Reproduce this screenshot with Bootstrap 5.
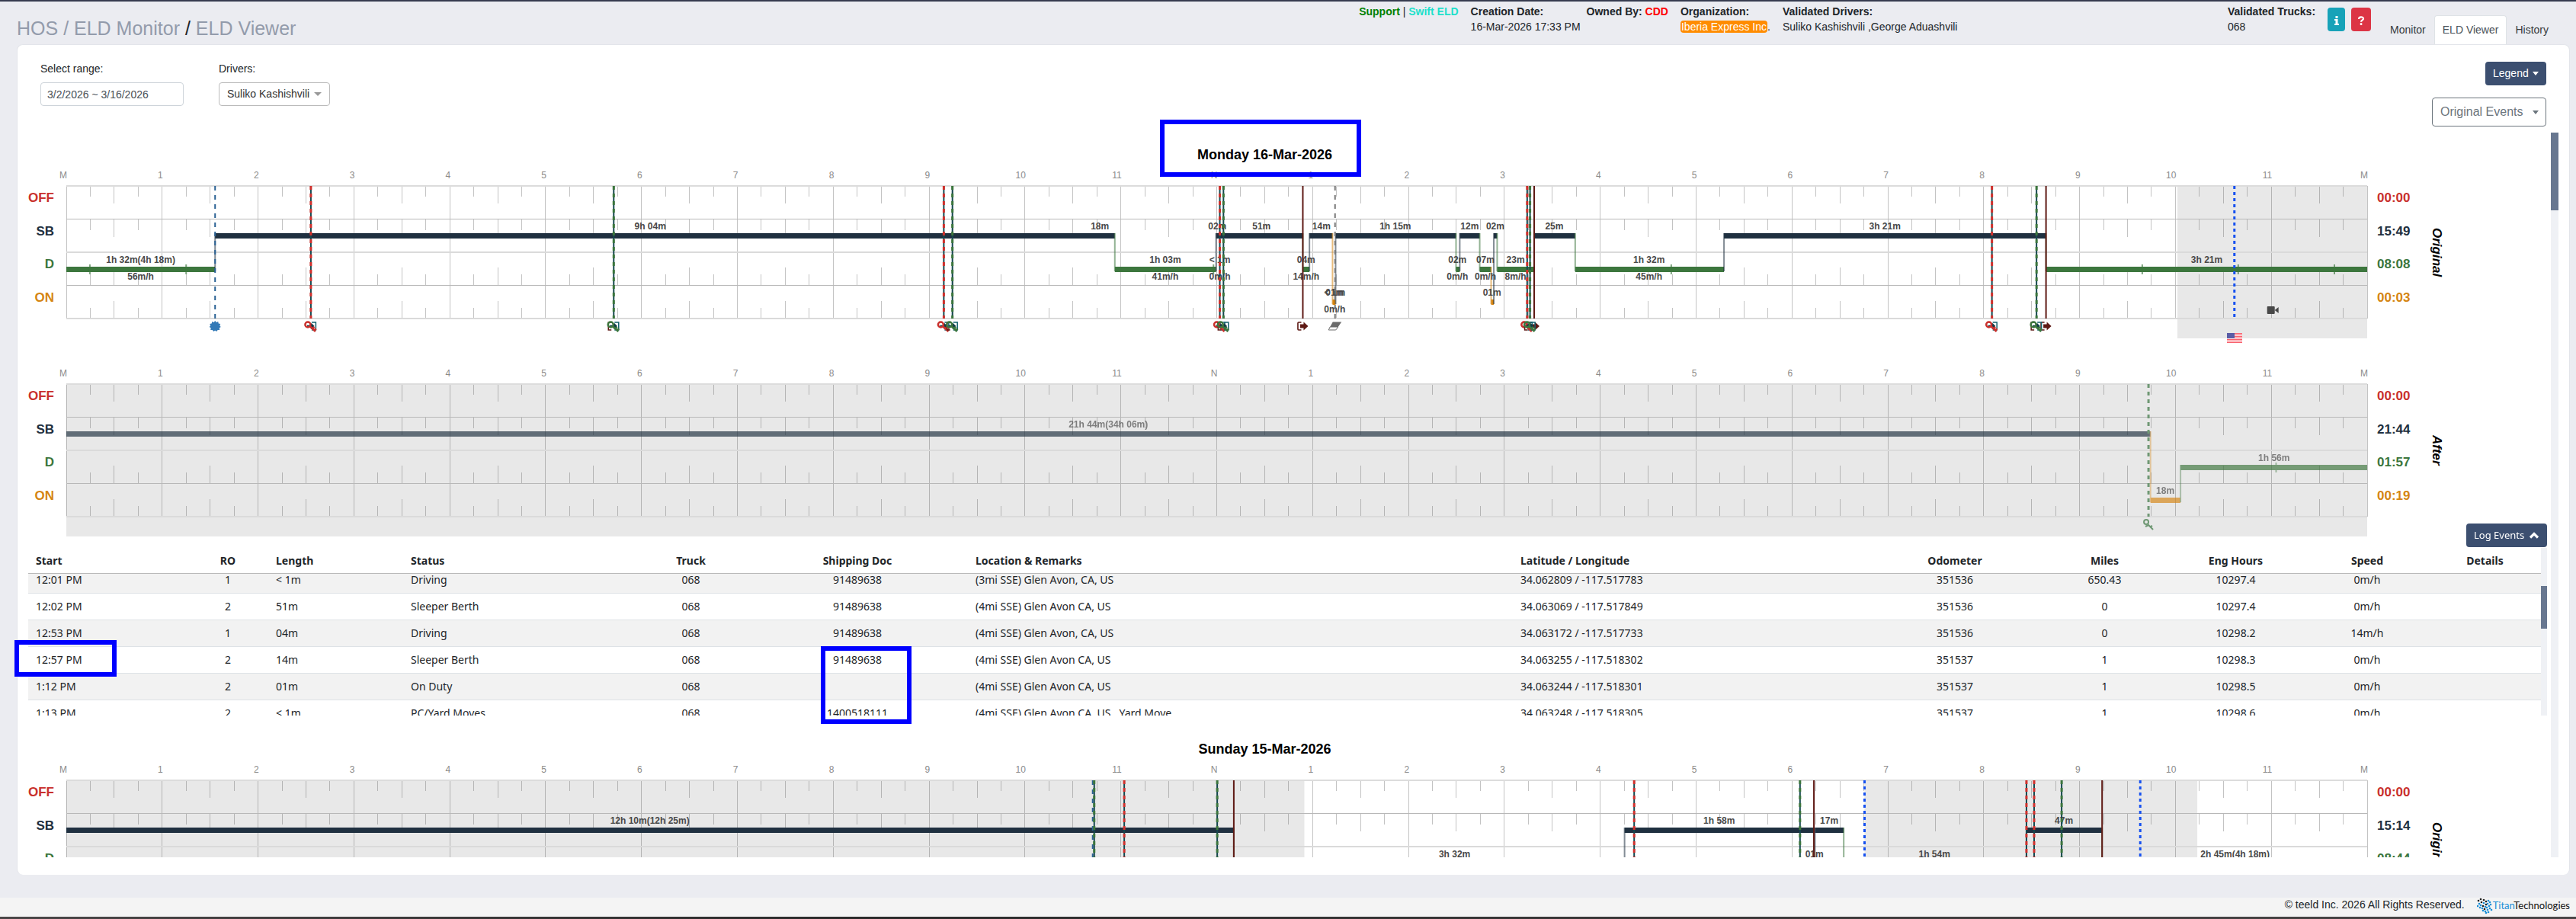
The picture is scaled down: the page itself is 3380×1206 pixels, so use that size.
<!DOCTYPE html>
<html lang="en">
<head>
<meta charset="utf-8">
<meta name="viewport" content="width=device-width, initial-scale=1">
<title>ELD Viewer</title>
<link href="https://cdn.jsdelivr.net/npm/bootstrap@5.3.0/dist/css/bootstrap.min.css" rel="stylesheet">
<style>
:root{--navy:#3c4f70;--thumb:#687790;--track:#eff1f5}
body{font-family:"Liberation Sans",Arial,sans-serif;font-size:14px;line-height:20px;color:#212529;background:#ebecf1;border-top:2px solid #363b4f}
.page-head{height:56px;padding:0 25px 0 22px}
.crumbs{font-size:25px;line-height:30px;padding-top:20px}
.crumbs a{color:#939bab;text-decoration:none}
.meta-line{padding-top:3px;column-gap:16px}
.meta-line strong{display:block}
.created{flex:0 0 136px;min-width:0}
.drivers-meta{flex:0 0 568px}
.org-tag{background:#ff8c00;color:#fff;border-radius:4px;padding:0 1px}
.mini-btn{width:23px;height:31px;padding:0;line-height:29px;border-radius:4px;color:#fff;background:#17a2b8}
.mini-btn.wide{width:26px;background:#dc3545}
.nav-tabs{border:0;margin-left:14px;padding-top:18px}
.nav-tabs .nav-link{color:#343a40;padding:8px 10px 10px;line-height:20px;height:39px;border-radius:4px 4px 0 0}
.nav-tabs .nav-link.active{color:#495057;background:#fff;border-color:#dee2e6 #dee2e6 #fff}
.main-card{margin:0 8px 0 22px;background:#fff;border-radius:8px;border:1px solid #e3e5ea;border-bottom:0;padding:22px 14px 23px;position:relative}
.filters{padding:0 16px;height:85px}
.filters label{display:block;line-height:18px;margin-bottom:9px}
.filters .form-control,.filters .form-select{height:31px;font-size:14px;padding:4px 8px;border-radius:4px;border-color:#ced4da;color:#495057}
.range-box{width:188px;margin-right:46px}
.filters .form-select{width:146px;padding:4px 10px;border-color:#bbb;color:#333;background-image:url("data:image/svg+xml,%3Csvg xmlns='http://www.w3.org/2000/svg' viewBox='0 0 10 5'%3E%3Cpath d='M0 0h10L5 5z' fill='%23999'/%3E%3C/svg%3E");background-size:10px 5px;background-position:right 10px center}
.btn-navy{background:var(--navy);color:#fff;font-size:14px;line-height:21px;padding:4px 9px;border-radius:4px}
.btn-navy:hover{background:#2f405d;color:#fff}
.legend-btn{width:80px}
.orig-btn{font-size:16px;line-height:24px;padding:6px 9px 6px 10px;width:150px;border:1px solid #6c757d;color:#6c757d;background:#fff;border-radius:4px;margin-top:16px}
.caret-s{display:inline-block;border:4px solid transparent;border-top:5px solid currentColor;border-bottom:0}
.scroll-pane{flex:1 1 0;min-width:0;height:951px;overflow:hidden}
.scroll-row{column-gap:5px;margin-top:8px}
.track-lg{flex:none;width:10px;background:var(--track)}
.track-lg div{height:102px;background:var(--thumb)}
.track-sm{flex:none;width:8px;background:var(--track);padding-top:50px}
.track-sm div{height:56px;background:var(--thumb)}
.day-title{font-size:18px;line-height:22px;font-weight:700;color:#000;text-align:center;margin:0;padding:18px 60px 0 0}
.log-row + .log-row{margin-top:30px}
.side-l,.side-r{flex:none;height:204px;padding-top:30px;font-size:17px;font-weight:700;line-height:32px}
.side-l{width:50px;text-align:right;padding-right:16px}
.side-r{width:56px;padding-left:13px}
.side-l span,.side-r span{flex:1 1 0}
.c-off{color:#c9302c}.c-sb{color:#1f3040}.c-d{color:#3c763d}.c-on{color:#d58512}
.side-name{flex:none;width:180px;height:204px;padding:30px 0 0 25px}
.side-name span{writing-mode:vertical-rl;font-size:17px;line-height:20px;font-style:italic;font-weight:700;color:#000;height:174px;text-align:center}
.log-plot{flex:1 1 0;min-width:0}
.log-svg{display:block;width:100%;height:230px;overflow:visible}
.log-svg text{font-size:12px;font-weight:700;fill:#484848;text-anchor:middle}
.log-svg text.hr-no{font-weight:400;fill:#8b8b8b;text-anchor:end}
.events-bar{margin-top:-17px;padding-bottom:1px}
.events-btn{font-family:"Noto Sans","Open Sans",sans-serif;font-size:13px;width:106px;white-space:nowrap}
.events-wrap{height:220px}
.events-clip{flex:1 1 0;min-width:0;overflow:hidden}
.events-tbl{font-family:"Noto Sans","Open Sans",sans-serif;font-size:14px;line-height:20px;width:100%;table-layout:fixed;border-collapse:separate;border-spacing:0;color:#212529}
.events-tbl th{position:sticky;top:0;background:#fff;height:34px;padding:0 10px;border-bottom:1px solid #b9b9b9;white-space:nowrap;z-index:1}
.events-tbl td{height:35px;padding:0 10px;border-bottom:1px solid #dee2e6;white-space:nowrap}
.events-tbl tbody tr:nth-child(odd) td{background:#f2f2f2}
.day-two .day-title{padding-top:33px}
.note-box{position:absolute;border:6px solid #00f;pointer-events:none;z-index:3}
.note-day{left:calc(50% - 175px);top:98px;width:264px;height:75px}
.note-start{left:-4px;top:781px;width:134px;height:48px}
.note-doc{left:1054px;top:789px;width:119px;height:102px}
.foot{margin-top:30px;height:25px;background:#f4f4f4;padding:0 8px 0 0;column-gap:16px;line-height:18px}
.foot-brand{font-family:Lato,sans-serif;font-size:13px;line-height:21px;color:#111}
.foot-brand b{font-weight:400;color:#1b8fd6}
.foot-end{height:3px;background:linear-gradient(90deg,#4a4647,#2a2a2a 33%,#4a4647)}
</style>
</head>
<body>
<header class="page-head d-flex">
  <nav class="crumbs me-auto" aria-label="breadcrumb"><a href="#">HOS</a> <a href="#">/ ELD Monitor</a> / <a href="#">ELD Viewer</a></nav>
  <div class="meta-line d-flex text-nowrap">
    <div><strong><span style="color:#008000">Support</span> <span class="fw-normal">|</span> <span style="color:#1de0cb">Swift ELD</span></strong></div>
    <div class="created"><strong>Creation Date:</strong>16-Mar-2026 17:33 PM</div>
    <div><strong>Owned By: <span style="color:#f00">CDD</span></strong></div>
    <div><strong>Organization:</strong><span class="org-tag">Iberia Express Inc</span>.</div>
    <div class="drivers-meta"><strong>Validated Drivers:</strong>Suliko Kashishvili ,George Aduashvili</div>
    <div><strong>Validated Trucks:</strong>068</div>
  </div>
  <div class="d-flex gap-2 ms-3 pt-2 align-items-start">
    <button class="btn mini-btn" type="button" aria-label="Info"><svg width="8" height="12" viewBox="0 0 8 12"><path fill="#fff" d="M2.500 0h3v3h-3zM1 4h4.500v6H7v2H1v-2h1.500V6H1z"/></svg></button>
    <button class="btn mini-btn wide" type="button" aria-label="Help"><svg width="10" height="12" viewBox="0 0 10 12"><path fill="none" stroke="#fff" stroke-width="2.200" d="M2 4C2 .6 8 .6 8 3.600 8 5.500 5 5.400 5 7.800"/><path fill="#fff" d="M3.800 9.200h2.500V12H3.800z"/></svg></button>
  </div>
  <ul class="nav nav-tabs flex-nowrap text-nowrap">
    <li class="nav-item"><a class="nav-link" href="#">Monitor</a></li>
    <li class="nav-item"><a class="nav-link active" href="#">ELD Viewer</a></li>
    <li class="nav-item"><a class="nav-link" href="#">History</a></li>
  </ul>
</header>

<main class="main-card">
  <div class="filters d-flex">
    <div class="range-box"><label for="range">Select range:</label><input id="range" class="form-control" value="3/2/2026 ~ 3/16/2026"></div>
    <div><label for="drv">Drivers:</label><select id="drv" class="form-select"><option>Suliko Kashishvili</option></select></div>
    <div class="ms-auto d-flex flex-column align-items-end">
      <button class="btn btn-navy legend-btn d-flex justify-content-between align-items-center" type="button">Legend <span class="caret-s"></span></button>
      <button class="btn orig-btn d-flex justify-content-between align-items-center" type="button">Original Events <span class="caret-s"></span></button>
    </div>
  </div>

  <div class="scroll-row d-flex">
    <div class="scroll-pane">
      <section>
        <h2 class="day-title">Monday 16-Mar-2026</h2>
        <div class="log-row d-flex" data-log="mon" data-name="Original" data-times="00:00,15:49,08:08,00:03"></div>
        <div class="log-row d-flex" data-log="after" data-name="After" data-times="00:00,21:44,01:57,00:19"></div>
        <div class="events-bar d-flex justify-content-end position-relative">
          <button class="btn btn-navy events-btn d-flex justify-content-between align-items-center" type="button">Log Events <svg width="14" height="9" viewBox="0 0 14 9"><path d="M2 7.500 7 2.500l5 5" fill="none" stroke="#fff" stroke-width="3.200"/></svg></button>
        </div>
        <div class="events-wrap d-flex">
          <div class="events-clip" id="clip">
            <table class="events-tbl">
              <colgroup><col style="width:209px"><col style="width:106px"><col style="width:177px"><col style="width:304px"><col style="width:147px"><col style="width:290px"><col style="width:715px"><col style="width:464px"><col style="width:232px"><col style="width:161px"><col style="width:183px"><col style="width:162px"><col style="width:147px"></colgroup>
              <thead><tr><th>Start</th><th class="text-center">RO</th><th>Length</th><th>Status</th><th class="text-center">Truck</th><th class="text-center">Shipping Doc</th><th>Location &amp; Remarks</th><th>Latitude / Longitude</th><th class="text-center">Odometer</th><th class="text-center">Miles</th><th class="text-center">Eng Hours</th><th class="text-center">Speed</th><th class="text-center">Details</th></tr></thead>
              <tbody id="rows"></tbody>
            </table>
          </div>
          <div class="track-sm"><div></div></div>
        </div>
      </section>
      <section class="day-two">
        <h2 class="day-title">Sunday 15-Mar-2026</h2>
        <div class="log-row d-flex" data-log="sun" data-name="Original" data-times="00:00,15:14,08:44,00:02"></div>
      </section>
    </div>
    <div class="track-lg"><div></div></div>
  </div>
  <div class="note-box note-day"></div>
  <div class="note-box note-start"></div>
  <div class="note-box note-doc"></div>
</main>

<footer class="foot d-flex justify-content-end">
  <span>© teeld Inc. 2026 All Rights Reserved.</span>
  <span class="foot-brand d-flex"><svg id="dots" width="21" height="22" viewBox="0 0 21 22"></svg><span><b>Titan</b>Technologies</span></span>
</footer>
<div class="foot-end"></div>

<script src="https://cdn.jsdelivr.net/npm/bootstrap@5.3.0/dist/js/bootstrap.bundle.min.js"></script>
<script>
// Event table rows
const events=[
 ['12:01 PM',1,'&lt; 1m','Driving','068','91489638','(3mi SSE) Glen Avon, CA, US','34.062809 / -117.517783','351536','650.43','10297.4','0m/h',''],
 ['12:02 PM',2,'51m','Sleeper Berth','068','91489638','(4mi SSE) Glen Avon CA, US','34.063069 / -117.517849','351536','0','10297.4','0m/h',''],
 ['12:53 PM',1,'04m','Driving','068','91489638','(4mi SSE) Glen Avon, CA, US','34.063172 / -117.517733','351536','0','10298.2','14m/h',''],
 ['12:57 PM',2,'14m','Sleeper Berth','068','91489638','(4mi SSE) Glen Avon CA, US','34.063255 / -117.518302','351537','1','10298.3','0m/h',''],
 ['1:12 PM',2,'01m','On Duty','068','','(4mi SSE) Glen Avon CA, US','34.063244 / -117.518301','351537','1','10298.5','0m/h',''],
 ['1:13 PM',2,'&lt; 1m','PC/Yard Moves','068','1400518111','(4mi SSE) Glen Avon CA, US , Yard Move','34.063248 / -117.518305','351537','1','10298.6','0m/h','']];
const left=[0,2,3,6,7];
document.getElementById('rows').innerHTML=events.map(r=>'<tr>'+r.map((c,i)=>`<td${left.includes(i)?'':' class="text-center"'}>${c}</td>`).join('')+'</tr>').join('');
document.getElementById('clip').scrollTop=9;

// Logs: hours from midnight; segs = [status,end]; labels = [hour,status,duration,speed]
const logs={
 mon:{shade:[[22.02,24]],
  segs:[['D',1.552],['SB',10.937],['D',11.993],['SB',12.898],['D',12.967],['SB',13.208],['ON',13.24],['SB',14.496],['D',14.535],['SB',14.743],['D',14.862],['ON',14.89],['SB',14.925],['D',15.311],['SB',15.739],['D',17.291],['SB',20.65],['D',24]],
  labels:[[.776,'D','1h 32m(4h 18m)','56m/h'],[6.091,'SB','9h 04m'],[10.781,'SB','18m'],[11.463,'D','1h 03m','41m/h'],[12.006,'SB','02m'],[12.032,'D','< 1m','0m/h'],[12.467,'SB','51m'],[12.932,'D','04m','14m/h'],[13.092,'SB','14m'],[13.23,'ON','01m'],[13.23,'ON','< 1m','0m/h'],[13.863,'SB','1h 15m'],[14.51,'D','02m','0m/h'],[14.638,'SB','12m'],[14.802,'D','07m','0m/h'],[14.905,'SB','02m'],[14.871,'ON','01m'],[15.117,'D','23m','8m/h'],[15.521,'SB','25m'],[16.509,'D','1h 32m','45m/h'],[18.969,'SB','3h 21m'],[22.327,'D','3h 21m']],
  ticks:[.246,1.25,11.966,16.741,21.654,22.655,23.658],
  marks:[[1.552,'blue'],[2.551,'red'],[5.71,'green'],[9.153,'red'],[9.243,'green'],[12.032,'red'],[12.07,'green'],[12.898,'exit'],[13.234,'gray'],[15.311,'exit'],[15.238,'red'],[15.268,'green'],[20.086,'red'],[20.65,'exit'],[20.551,'green'],[22.615,'flag']],cam:23.012},
 after:{dim:1,shade:[[0,24]],segs:[['SB',21.74],['ON',22.053],['D',24]],
  labels:[[10.869,'SB','21h 44m(34h 06m)'],[21.894,'ON','18m'],[23.028,'D','1h 56m']],ticks:[23.05],marks:[[21.719,'key']]},
 sun:{shade:[[0,12.914],[18.756,22.228]],
  segs:[['SB',12.178],['D',16.254],['SB',18.228],['D',18.24],['SB',18.54],['D',20.446],['SB',21.235],['D',24]],
  labels:[[6.087,'SB','12h 10m(12h 25m)'],[14.481,'D','3h 32m'],[17.241,'SB','1h 58m'],[18.234,'D','01m'],[18.388,'SB','17m'],[19.486,'D','1h 54m'],[20.837,'SB','47m'],[22.622,'D','2h 45m(4h 18m)']],ticks:[],
  marks:[[10.706,'blue'],[10.722,'green'],[11.035,'red'],[12.005,'green'],[12.178,'exit'],[16.354,'red'],[18.084,'green'],[18.229,'exit'],[18.757,'flag'],[20.446,'red'],[20.526,'red'],[20.813,'green'],[21.235,'exit'],[21.633,'flag']]}};
const X=h=>(h/24*100).toFixed(4)+'%', T=30, mid={SB:T+65,D:T+109,ON:T+152}, col={SB:'#1f3040',D:'#3c763d',ON:'#d58512'};
const line=(h,y1,y2,c,w,extra='')=>`<line x1="${X(h)}" x2="${X(h)}" y1="${y1}" y2="${y2}" stroke="${c}" stroke-width="${w}" ${extra}/>`;
const key=c=>`<g fill="none" stroke="${c}" stroke-width="2.500"><circle cx="-4" cy="-2" r="3.500"/><path d="M-1.500 0 6 7M2 3.500l2.500-2.500M4 5.500 7 3.500"/></g>`;
const door='<g fill="none" stroke="#12606c" stroke-width="1.500"><path d="M1-5h5.500V5H1"/><path d="M-5 0h8M0-3l3 3-3 3" stroke="#123c48" stroke-width="2.500"/></g>';
const icons={
 red:door+key('#c9302c'),
 green:'<path d="M-2-5h-5v10h4" fill="none" stroke="#5e1914" stroke-width="1.500"/>'+door+key('#3c763d'),
 key:'<g fill="none" stroke="#6f9874" stroke-width="2"><circle cx="-3" cy="-3" r="3"/><path d="M-4 3 0 1 6 7M2 3.500l3-1.500"/></g>',
 exit:'<path d="M-2-5h-3.500q-1 0-1 1V4q0 1 1 1H-2" fill="none" stroke="#5e1914" stroke-width="1.600"/><path d="M-3.500-2.500H1v-3L7 0 1 5.500v-3h-4.500z" fill="#5e1914"/>',
 gray:'<path d="M-3-5.500H8.500L4 1H-6.500z" fill="#6b6b6b"/><path d="M-6.500 1H4L1 5h-9.500z" fill="#fff" stroke="#6b6b6b"/>',
 blue:'<path fill="#337ab7" d="M0-7 1.700-5 4-6l.5 2.500L7-3 6-.8 7.500 1 5.500 2.500 6 5 3.500 5 2 7 0 5.700-2 7-3.500 5-6 5-5.500 2.500-7.500 1-6-.8-7-3l2.500-.5L-4-6l2.300 1z"/>'};
const flag='<g transform="translate(-10,9)" shape-rendering="crispEdges"><path fill="#ffe3e5" d="M0 0h20v13H0z"/><path stroke="#f8606c" stroke-width="1" d="M0 .5h20M0 2.500h20M0 4.500h20M0 6.500h20M0 8.500h20M0 10.500h20M0 12.500h20"/><path fill="#5a5da6" d="M0 0h10v7H0z"/></g>';
function draw(L){
 let s='';
 for(const [a,b] of L.shade) s+=`<rect x="${X(a)}" y="${T}" width="${X(b-a)}" height="200" fill="#e8e8e8"/>`;
 const g='rgba(90,90,90,.36)';
 let q='';
 for(let i=0;i<=96;i++){const h=i/4;
  if(i%4===0) q+=line(h,T,T+174,g,1);
  else{const n=i%2?14:23; q+=line(h,T,T+n,g,1)+line(h,T+44,T+44+n,g,1)+line(h,T+130-n,T+130,g,1)+line(h,T+174-n,T+174,g,1);}}
 s+=`<g shape-rendering="crispEdges">${q}`;
 [[0,'#dcdcdc',2],[43,'#b8b8b8',1],[87,'#dadada',2],[130,'#b8b8b8',1],[174,'#dadada',2]].forEach(([y,c,w])=>s+=`<rect x="0" width="100%" y="${T+y-(w>1?1:0)}" height="${w}" fill="${c}"/>`);
 s+='</g>';
 for(let i=0;i<=24;i++){const t=i%24===0?'M':i===12?'N':i%12; s+=`<text class="hr-no" x="${X(i)}" dx="1" y="20">${t}</text>`;}
 s+=`<g ${L.dim?'opacity=".67"':''}>`;
 let p=0,prev=null;
 for(const [st,e] of L.segs){
  if(prev) s+=line(p,Math.min(mid[prev],mid[st])-3,Math.max(mid[prev],mid[st])+3,col[st],2,'opacity=".55"');
  s+=`<rect x="${X(p)}" y="${mid[st]-3}" width="${X(e-p)}" height="7" fill="${col[st]}"/>`;
  prev=st;p=e;}
 for(const t of L.ticks) s+=line(t,mid.D-6,mid.D+7,'#3c763d',2,'opacity=".65"');
 for(const [h,st,a,b] of L.labels){s+=`<text x="${X(h)}" y="${mid[st]-8}">${a.replace('<','&lt;')}</text>`; if(b) s+=`<text x="${X(h)}" y="${mid[st]+14}">${b}</text>`;}
 s+='</g>';
 const E=T+174;
 for(const [h,k] of L.marks){
  if(k==='red'||k==='green') s+=line(h,T,E,'#16484f',2)+line(h,T,E,k==='red'?'#d0302c':'#3c763d',3,'stroke-dasharray="5 5"');
  if(k==='blue') s+=line(h,T,E,'#2b6294',2,'stroke-dasharray="6 6"');
  if(k==='gray') s+=line(h,T,E,'#777',2,'stroke-dasharray="6 6"');
  if(k==='exit') s+=line(h,T,E,'#5e1914',2);
  if(k==='flag') s+=line(h,T,E-1,'#1550f0',3,'stroke-dasharray="4 4"');
  if(k==='key') s+=line(h,T,E,'#6f9874',3,'stroke-dasharray="5 5"');
 }
 for(const [h,k] of L.marks) s+=`<svg x="${X(h)}" y="${T+184}" overflow="visible">${k==='flag'?flag:icons[k]}</svg>`;
 if(L.cam) s+=`<svg x="${X(L.cam)}" y="${T+163}" overflow="visible"><rect x="-7" y="-5" width="10" height="10" rx="1" fill="#484848"/><path d="M3 0 8-4V4z" fill="#484848"/></svg>`;
 return `<svg class="log-svg">${s}</svg>`;
}
const cls=['off','sb','d','on'],names=['OFF','SB','D','ON'];
document.querySelectorAll('[data-log]').forEach(el=>{
 const cells=a=>a.map((t,i)=>`<span class="c-${cls[i]}">${t}</span>`).join('');
 el.innerHTML=`<div class="side-l d-flex flex-column">${cells(names)}</div><div class="log-plot">${draw(logs[el.dataset.log])}</div><div class="side-r d-flex flex-column">${cells(el.dataset.times.split(','))}</div><div class="side-name"><span>${el.dataset.name}</span></div>`;
});

// Brand mark made of scattered dots
document.getElementById('dots').innerHTML=[[2,4,0],[5,2,0],[9,3,0],[12,5,0],[3,8,1],[6,6,0],[9,7,1],[12,9,0],[15,4,1],[17,6,1],[1,11,1],[5,10,1],[8,11,0],[11,12,1],[14,8,1],[4,13,1],[7,14,1],[10,15,0],[13,13,1],[16,11,1],[18,9,1],[8,17,1],[11,18,1],[14,16,1],[17,14,1],[12,20,1],[15,19,1],[19,16,1]].map(([x,y,b])=>`<circle cx="${x}" cy="${y}" r="1.300" fill="${b?'#1b8fd6':'#222'}"/>`).join('');
</script>
</body>
</html>
